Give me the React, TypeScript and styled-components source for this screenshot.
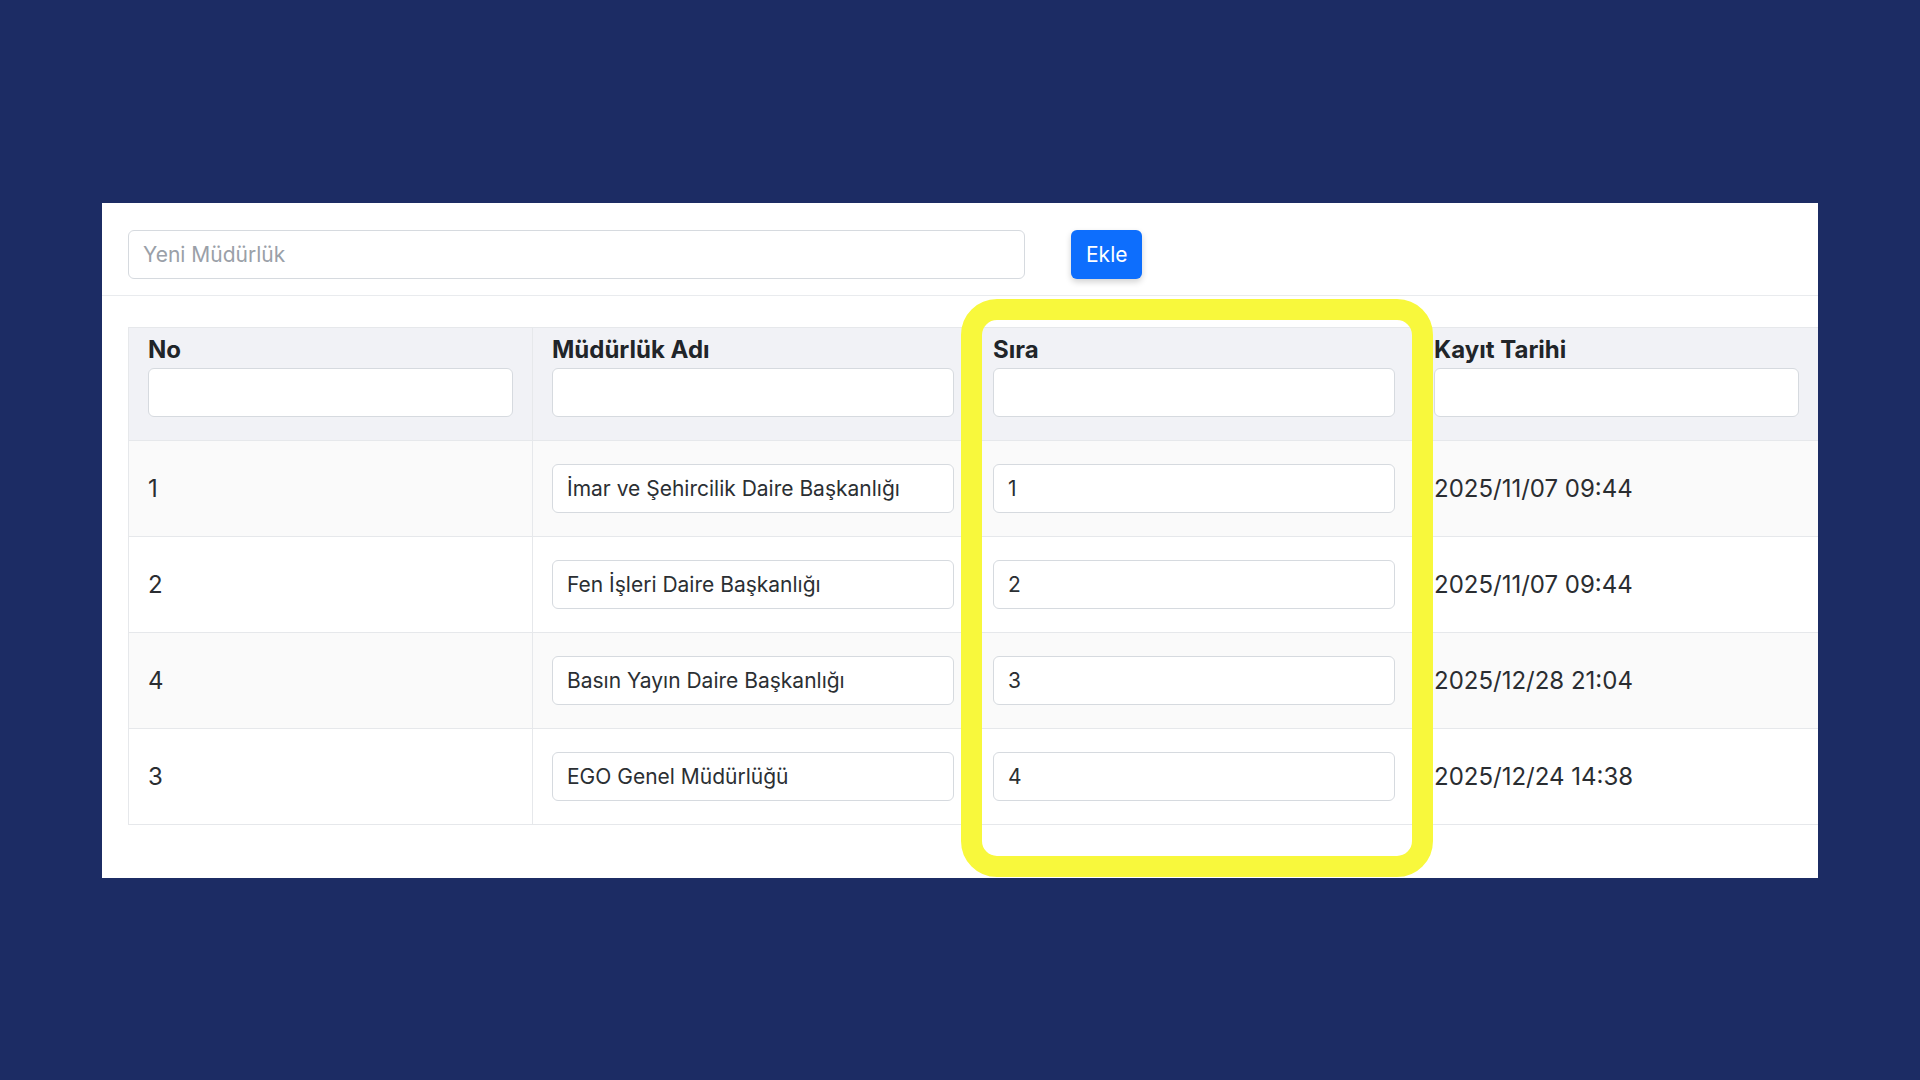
import React from 'react'
import styled, { createGlobalStyle } from 'styled-components'

const GlobalStyle = createGlobalStyle`
  * {
    box-sizing: border-box;
  }
  body {
    margin: 0;
    background: #1c2c64;
    font-family: Inter, 'Noto Sans', sans-serif;
    color: #212529;
  }
`

const Page = styled.div`
  min-height: 100vh;
  display: flex;
  align-items: center;
  justify-content: center;
`

const Panel = styled.div`
  position: relative;
  width: 1716px;
  background: #ffffff;
  overflow: hidden;
`

const Toolbar = styled.div`
  display: flex;
  align-items: center;
  gap: 46px;
  padding: 27px 26px 16px;
  border-bottom: 1px solid #e9ebee;
`

const TextInput = styled.input<{ $width?: number }>`
  width: ${(p) => (p.$width ? `${p.$width}px` : '100%')};
  height: 49px;
  padding: 0 14px;
  border: 1px solid #d6dadf;
  border-radius: 6px;
  background: #ffffff;
  font-family: Inter, sans-serif;
  font-size: 21px;
  color: #2b2f33;
  outline: none;

  &::placeholder {
    color: #9aa0a8;
  }
`

const AddButton = styled.button`
  height: 49px;
  padding: 0 15px;
  border: none;
  border-radius: 6px;
  background: #0d6efd;
  color: #ffffff;
  font-family: Inter, sans-serif;
  font-size: 21px;
  box-shadow: 0 3px 6px rgba(0, 0, 0, 0.18);
  cursor: pointer;
`

const TableWrap = styled.div`
  padding: 31px 0 53px 26px;
`

const Table = styled.table`
  width: 1690px;
  border-collapse: collapse;
  table-layout: fixed;
`

const HeadCell = styled.th`
  height: 113px;
  padding: 7px 19px 22px 19px;
  background: #f1f2f6;
  border: 1px solid #e6e8eb;
  text-align: left;
  vertical-align: top;
`

const HeadLabel = styled.div`
  font-size: 24px;
  font-weight: 700;
  line-height: 29px;
  margin-bottom: 4px;
  color: #212529;
`

const Row = styled.tr<{ $striped: boolean }>`
  background: ${(p) => (p.$striped ? '#fafafa' : '#ffffff')};
`

const Cell = styled.td`
  height: 96px;
  padding: 0 19px 0 19px;
  border: 1px solid #e6e8eb;
  font-size: 24px;
  color: #2a2d31;
  vertical-align: middle;
`

const Highlight = styled.div`
  position: absolute;
  left: 859px;
  top: 96px;
  width: 472px;
  height: 578px;
  border: 21px solid #f8f83c;
  border-radius: 36px;
  pointer-events: none;
`

const rows = [
  { no: 1, name: 'İmar ve Şehircilik Daire Başkanlığı', order: '1', date: '2025/11/07 09:44' },
  { no: 2, name: 'Fen İşleri Daire Başkanlığı', order: '2', date: '2025/11/07 09:44' },
  { no: 4, name: 'Basın Yayın Daire Başkanlığı', order: '3', date: '2025/12/28 21:04' },
  { no: 3, name: 'EGO Genel Müdürlüğü', order: '4', date: '2025/12/24 14:38' },
]

const columns = [
  { label: 'No', width: 404 },
  { label: 'Müdürlük Adı', width: 441 },
  { label: 'Sıra', width: 441 },
  { label: 'Kayıt Tarihi', width: 404 },
]

export default function App() {
  return (
    <>
      <GlobalStyle />
      <Page>
        <Panel>
          <Toolbar>
            <TextInput $width={897} placeholder="Yeni Müdürlük" />
            <AddButton>Ekle</AddButton>
          </Toolbar>
          <TableWrap>
            <Table>
              <colgroup>
                {columns.map((c) => (
                  <col key={c.label} style={{ width: c.width }} />
                ))}
              </colgroup>
              <thead>
                <tr>
                  {columns.map((c) => (
                    <HeadCell key={c.label}>
                      <HeadLabel>{c.label}</HeadLabel>
                      <TextInput />
                    </HeadCell>
                  ))}
                </tr>
              </thead>
              <tbody>
                {rows.map((r, i) => (
                  <Row key={r.no} $striped={i % 2 === 0}>
                    <Cell>{r.no}</Cell>
                    <Cell>
                      <TextInput defaultValue={r.name} />
                    </Cell>
                    <Cell>
                      <TextInput defaultValue={r.order} />
                    </Cell>
                    <Cell>{r.date}</Cell>
                  </Row>
                ))}
              </tbody>
            </Table>
          </TableWrap>
          <Highlight />
        </Panel>
      </Page>
    </>
  )
}
